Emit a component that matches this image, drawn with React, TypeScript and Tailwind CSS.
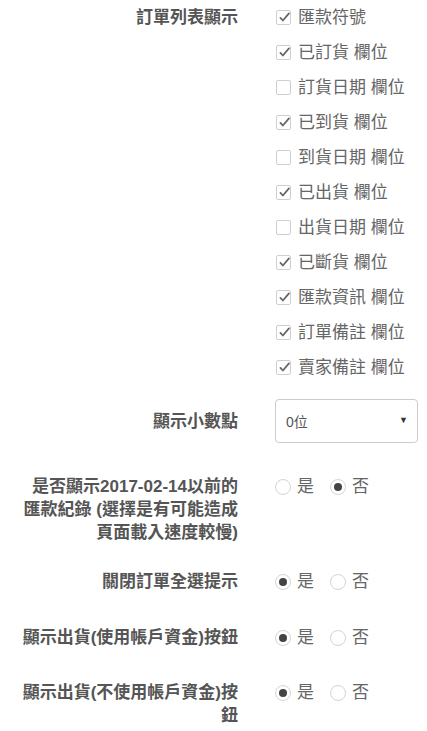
const columns = [
  { label: "匯款符號", checked: true },
  { label: "已訂貨 欄位", checked: true },
  { label: "訂貨日期 欄位", checked: false },
  { label: "已到貨 欄位", checked: true },
  { label: "到貨日期 欄位", checked: false },
  { label: "已出貨 欄位", checked: true },
  { label: "出貨日期 欄位", checked: false },
  { label: "已斷貨 欄位", checked: true },
  { label: "匯款資訊 欄位", checked: true },
  { label: "訂單備註 欄位", checked: true },
  { label: "賣家備註 欄位", checked: true },
];

function Checkbox({ checked }: { checked: boolean }) {
  return (
    <span className="relative inline-block h-[15px] w-[15px] shrink-0 rounded-[2px] border border-[#cfcfcf] bg-white">
      {checked && (
        <svg
          viewBox="0 0 16 16"
          className="absolute left-[1px] top-[0px] h-[13px] w-[13px]"
          fill="none"
          stroke="#666"
          strokeWidth="2.2"
          strokeLinecap="round"
          strokeLinejoin="round"
        >
          <path d="M3 8.5l3 3.2L13.5 3" />
        </svg>
      )}
    </span>
  );
}

function Radio({ checked }: { checked: boolean }) {
  return (
    <span className="flex h-4 w-4 shrink-0 items-center justify-center rounded-full border border-[#d4d4d4] bg-white">
      {checked && <span className="h-2 w-2 rounded-full bg-[#444]" />}
    </span>
  );
}

function YesNo({ yes }: { yes: boolean }) {
  return (
    <div className="flex h-[23px] items-center text-[17px] text-[#666]">
      <label className="flex items-center gap-[6px]">
        <Radio checked={yes} />
        <span>是</span>
      </label>
      <label className="ml-[16px] flex items-center gap-[6px]">
        <Radio checked={!yes} />
        <span>否</span>
      </label>
    </div>
  );
}

const rowClass = "grid grid-cols-[238px_1fr] gap-x-[37px]";
const labelClass = "text-right text-[17px] font-bold leading-[23px] text-[#555]";

export default function App() {
  return (
    <div
      className="min-h-screen w-[427px] bg-white"
      style={{ fontFamily: '"Liberation Sans", "Noto Sans CJK TC", sans-serif' }}
    >
      <div className={rowClass}>
        <div className={`${labelClass} flex h-[35px] items-center justify-end`}>訂單列表顯示</div>
        <div className="flex flex-col">
          {columns.map((c) => (
            <label key={c.label} className="flex h-[35px] items-center gap-[7px] pl-[1px] text-[17px] text-[#666]">
              <Checkbox checked={c.checked} />
              <span>{c.label}</span>
            </label>
          ))}
        </div>
      </div>

      <div className={`${rowClass} mt-[14px]`}>
        <div className={`${labelClass} flex h-[44px] items-center justify-end`}>顯示小數點</div>
        <div className="flex h-[44px] w-[143px] items-center justify-between rounded-[4px] border border-[#ccc] pl-[10px] pr-[9px] text-[14px] text-[#555]">
          <span className="pt-[2px]">0位</span>
          <span className="text-[9px] text-[#333]">▼</span>
        </div>
      </div>

      <div className={`${rowClass} mt-[32px]`}>
        <div className={labelClass}>
          是否顯示2017-02-14以前的
          <br />
          匯款紀錄 (選擇是有可能造成
          <br />
          頁面載入速度較慢)
        </div>
        <YesNo yes={false} />
      </div>

      <div className={`${rowClass} mt-[26px]`}>
        <div className={labelClass}>關閉訂單全選提示</div>
        <YesNo yes={true} />
      </div>

      <div className={`${rowClass} mt-[33px]`}>
        <div className={labelClass}>顯示出貨(使用帳戶資金)按鈕</div>
        <YesNo yes={true} />
      </div>

      <div className={`${rowClass} mt-[32px]`}>
        <div className={labelClass}>
          顯示出貨(不使用帳戶資金)按
          <br />
          鈕
        </div>
        <YesNo yes={true} />
      </div>
    </div>
  );
}
